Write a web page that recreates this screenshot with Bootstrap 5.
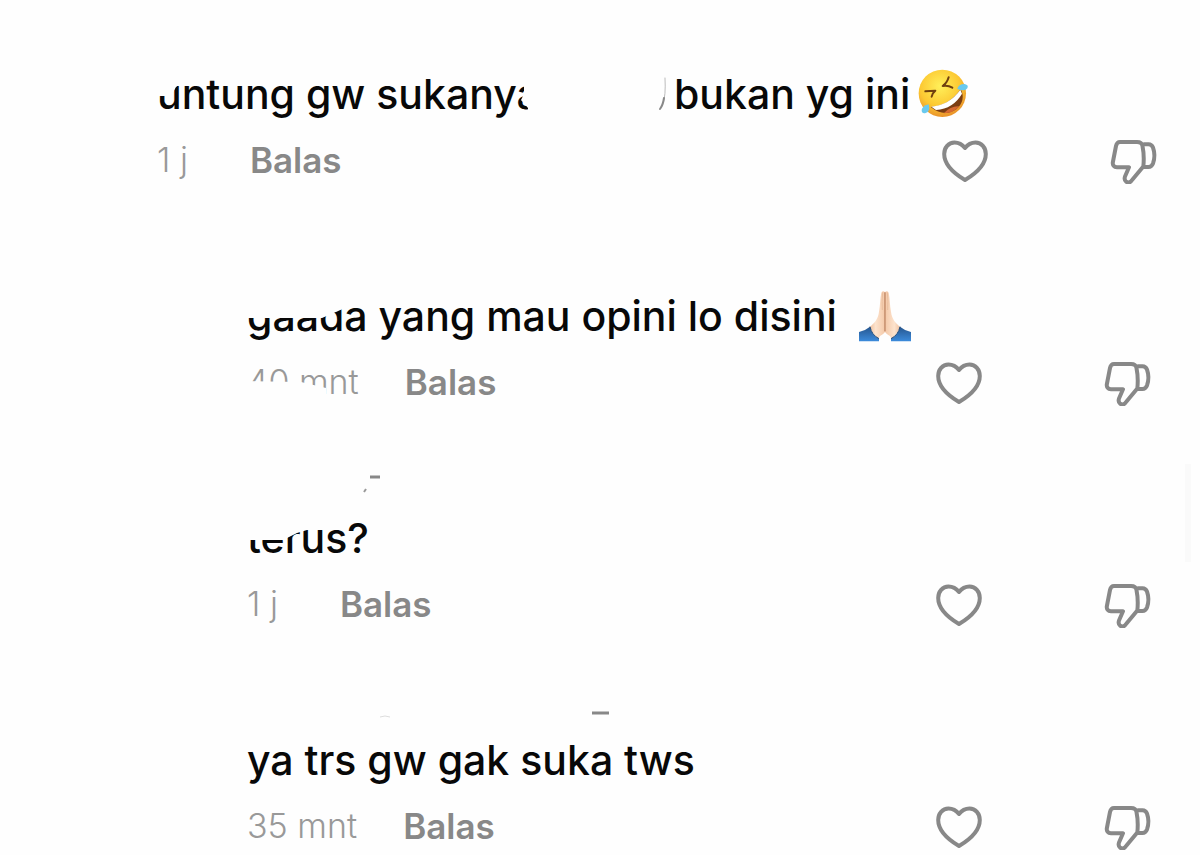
<!DOCTYPE html>
<html lang="id">
<head>
<meta charset="utf-8">
<meta name="viewport" content="width=device-width, initial-scale=1">
<title>Komentar</title>
<link rel="stylesheet" href="https://cdn.jsdelivr.net/npm/bootstrap@5.3.0/dist/css/bootstrap.min.css">
<style>
  body { font-family: Inter, "Noto Sans", sans-serif; background: #fefefe; color: #080808; }
  .thread { padding-top: 8px; overflow: hidden; }
  .comment { padding-left: 157px; padding-right: 42px; margin-bottom: 40px; }
  .comment.reply { padding-left: 247px; padding-right: 48px; }
  .comment:last-child { margin-bottom: -2px; }
  .author { height: 50px; }
  .message { height: 72px; font-size: 41px; line-height: 72px; font-weight: 500; white-space: nowrap; }
  .meta { height: 60px; line-height: 56px; }
  .time { font-size: 34px; font-weight: 300; color: #999; margin-right: 46px; white-space: nowrap; }
  .time.hours { margin-right: 62px; }
  .answer { font-size: 35px; font-weight: 600; color: #888; line-height: 56px; }
  .actions { gap: 121px; }
  .actions svg { fill: none; stroke: #888; stroke-width: 4; stroke-linejoin: round; stroke-linecap: round; display: block; }
  .face { margin-left: 8px; }
  .hands { margin-left: 21px; }
  /* Partly erased words */
  .erased { display: inline-block; }
  .erase-untung { clip-path: polygon(0 38px, 14px 38px, 19px 29px, 26px 24px, 28px 0, 367px 0, 367px 36px, 364px 42px, 371px 50px, 371px 100%, 0 100%); width: 501px; }
  .erase-gaada { clip-path: polygon(0 38px, 75px 38px, 98px 28px, 100px 0, 100% 0, 100% 100%, 0 100%); }
  .erase-40 { clip-path: polygon(0 0, 100% 0, 100% 100%, 80px 100%, 79px 34px, 54px 28px, 0 27px); }
  .erase-terus { clip-path: polygon(0 38px, 36px 38px, 50px 31px, 60px 28px, 62px 0, 100% 0, 100% 100%, 0 100%); }
  .name-short { padding-left: 116px; }
  .name-long { padding-left: 130px; }
  .scroll-mark { position: fixed; right: 9px; top: 464px; width: 6px; height: 98px; background: #fafafa; }
</style>
</head>
<body>
<svg class="d-none" aria-hidden="true">
  <symbol id="heart" viewBox="0 -1 48 48"><path d="M24 11C20.500 6.500 16.500 5.500 13.500 5.500C7.500 5.500 3.200 10.500 3.200 17C3.200 28 13 36.500 24 43C35 36.500 44.800 28 44.800 17C44.800 10.500 40.500 5.500 34.500 5.500C31.500 5.500 27.500 6.500 24 11Z"/></symbol>
  <symbol id="thumb" viewBox="0 -3 48 48"><path d="M10 3H27C30.500 3 32 4 32.500 7Q34.500 17 33.300 27.500L22.500 40.500C20.500 43.500 18.500 44.200 16.300 42.800C14.500 41.500 14.200 40 15 37.500L19 28.300H7C4 28.300 2.300 26 2.900 23L6 7C6.600 4.200 7.500 3 10 3Z"/><path d="M34 5.200H38.500C41 5.200 42 6 43 8.500Q45.800 16.500 43 24.500C42 27 41 28 38.500 28H34"/></symbol>
</svg>

<main class="thread">
  <article class="comment">
    <div class="author"></div>
    <div class="message d-flex align-items-center"><span class="erased erase-untung">untung gw sukanya</span><svg width="8" height="36" viewBox="0 0 8 36" fill="none" stroke-linecap="round" aria-hidden="true"><path stroke="#bbb" d="M7 2Q8 20 5 27"/><path stroke="#888" stroke-width="2" d="M6 22Q5 29 2 33"/></svg><span class="ps-2">bukan yg ini</span><svg class="face" width="51" height="50" viewBox="0 0 153 150" role="img" aria-label="Tertawa berguling">
      <defs><radialGradient id="face" cx=".45" cy=".35" r=".65"><stop offset="0" stop-color="#fff05a"/><stop offset=".65" stop-color="#fcc832"/><stop offset="1" stop-color="#e9922a"/></radialGradient></defs>
      <circle cx="73" cy="73" r="71" fill="url(#face)"/>
      <path d="M38 114Q94 110 128 60Q145 94 115 121Q78 146 38 114Z" fill="#7b3d13"/>
      <path d="M40 113Q94 108 127 62L132 74Q106 119 54 123Z" fill="#fff"/>
      <path d="M77 133Q99 110 124 112Q104 134 77 133Z" fill="#d66932"/>
      <path d="M22 67L52 65Q43 72 41 83M92 25Q87 42 74 51Q90 48 103 56" fill="none" stroke="#70400f" stroke-width="6" stroke-linecap="round" stroke-linejoin="round"/>
      <path d="M118 60Q121 45 140 45Q153 48 148 58Q141 69 118 60Z" fill="#69c9ee"/>
      <path d="M32 106Q38 128 23 132Q11 135 11 123Q12 112 32 106Z" fill="#69c9ee"/>
    </svg></div>
    <div class="meta d-flex align-items-center">
      <span class="time hours">1 j</span><button type="button" class="btn p-0 border-0 answer">Balas</button>
      <div class="actions d-flex ms-auto"><button type="button" class="btn p-0 border-0" aria-label="Suka"><svg width="48" height="48"><use href="#heart"/></svg></button><button type="button" class="btn p-0 border-0" aria-label="Tidak suka"><svg width="48" height="48"><use href="#thumb"/></svg></button></div>
    </div>
  </article>

  <article class="comment reply">
    <div class="author"></div>
    <div class="message d-flex align-items-center"><span class="erased erase-gaada">gaada yang mau opini lo disini</span><svg class="hands" width="54" height="52" viewBox="0 0 162 156" role="img" aria-label="Tangan menangkup">
      <defs><linearGradient id="skin"><stop offset="0" stop-color="#edbd9a"/><stop offset=".4" stop-color="#fde3cd"/><stop offset="1" stop-color="#f3c8a8"/></linearGradient><linearGradient id="sleeve" x2="0" y2="1"><stop offset="0" stop-color="#26558d"/><stop offset="1" stop-color="#3c8bdc"/></linearGradient></defs>
      <g id="hand"><path d="M81 7Q75 0 70 8C66 26 67 45 63 65C60 88 50 98 34 112L60 149C66 132 77 135 81 125Z" fill="url(#skin)"/><path d="M80 7V124" fill="none" stroke="#b87e5c" stroke-width="2"/><path d="M74 7Q71 35 73 60" fill="none" stroke="#e3b391" stroke-width="2"/><path d="M3 154V126Q23 121 36 110Q41 135 63 146V154Z" fill="url(#sleeve)"/><path d="M36 110Q41 135 63 146" fill="none" stroke="#244b76" stroke-width="3"/></g>
      <use href="#hand" transform="matrix(-1 0 0 1 162 0)"/>
    </svg></div>
    <div class="meta d-flex align-items-center">
      <span class="time erased erase-40">40 mnt</span><button type="button" class="btn p-0 border-0 answer">Balas</button>
      <div class="actions d-flex ms-auto"><button type="button" class="btn p-0 border-0" aria-label="Suka"><svg width="48" height="48"><use href="#heart"/></svg></button><button type="button" class="btn p-0 border-0" aria-label="Tidak suka"><svg width="48" height="48"><use href="#thumb"/></svg></button></div>
    </div>
  </article>

  <article class="comment reply">
    <div class="author name-short d-flex align-items-center"><svg width="18" height="36" viewBox="0 0 18 36" aria-hidden="true"><path d="M1 33L3 30" stroke="#999" stroke-width="2"/><path d="M7 18H17" stroke="#888" stroke-width="3"/></svg></div>
    <div class="message"><span class="erased erase-terus">terus?</span></div>
    <div class="meta d-flex align-items-center">
      <span class="time hours">1 j</span><button type="button" class="btn p-0 border-0 answer">Balas</button>
      <div class="actions d-flex ms-auto"><button type="button" class="btn p-0 border-0" aria-label="Suka"><svg width="48" height="48"><use href="#heart"/></svg></button><button type="button" class="btn p-0 border-0" aria-label="Tidak suka"><svg width="48" height="48"><use href="#thumb"/></svg></button></div>
    </div>
  </article>

  <article class="comment reply">
    <div class="author name-long d-flex align-items-end"><svg width="234" height="16" viewBox="0 0 234 16" aria-hidden="true"><path d="M3 9Q8 7 13 9" stroke="#ddd" fill="none"/><path d="M215 5H232" stroke="#888" stroke-width="3"/></svg></div>
    <div class="message">ya trs gw gak suka tws</div>
    <div class="meta d-flex align-items-center">
      <span class="time">35 mnt</span><button type="button" class="btn p-0 border-0 answer">Balas</button>
      <div class="actions d-flex ms-auto"><button type="button" class="btn p-0 border-0" aria-label="Suka"><svg width="48" height="48"><use href="#heart"/></svg></button><button type="button" class="btn p-0 border-0" aria-label="Tidak suka"><svg width="48" height="48"><use href="#thumb"/></svg></button></div>
    </div>
  </article>
</main>
<div class="scroll-mark" aria-hidden="true"></div>
<script src="https://cdn.jsdelivr.net/npm/bootstrap@5.3.0/dist/js/bootstrap.bundle.min.js"></script>
</body>
</html>
